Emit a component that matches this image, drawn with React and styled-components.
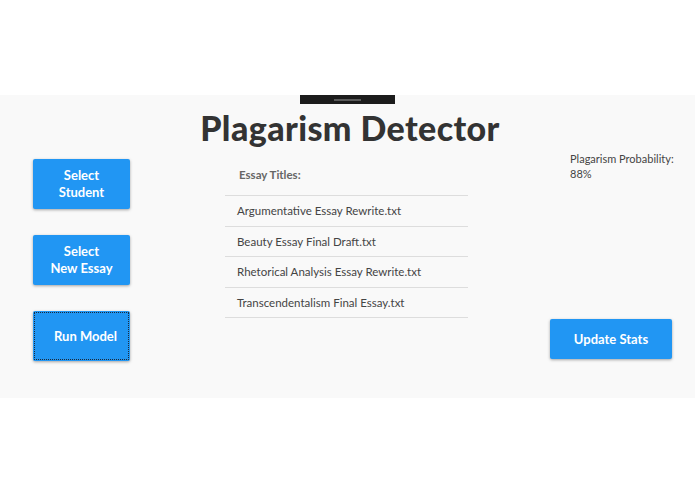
import React from "react";
import styled, { createGlobalStyle } from "styled-components";

const Global = createGlobalStyle`
  html, body { margin: 0; padding: 0; background: #ffffff; }
  body { font-family: Lato, "Open Sans", sans-serif; }
`;

const Page = styled.div`
  padding-top: 95px;
`;

const Panel = styled.section`
  background: #f9f9f9;
  height: 303px;
  display: flex;
  flex-direction: column;
  align-items: stretch;
`;

const Handle = styled.div`
  align-self: center;
  width: 95px;
  height: 9px;
  background: #1c1c1c;
  display: flex;
  justify-content: center;
  align-items: center;
  &::after {
    content: "";
    width: 27px;
    height: 2px;
    background: #5a5a5a;
  }
`;

const Title = styled.h1`
  margin: 4px 0 0;
  padding-left: 5px;
  text-align: center;
  font-family: Lato, "Open Sans", sans-serif;
  font-weight: 900;
  font-size: 34px;
  line-height: 40px;
  color: #333333;
  letter-spacing: 0.4px;
`;

const Content = styled.div`
  display: grid;
  grid-template-columns: 225px 243px 1fr;
  margin-top: 6px;
`;

const ButtonColumn = styled.div`
  display: flex;
  flex-direction: column;
  gap: 26px;
  padding: 5px 0 0 33px;
`;

const ActionButton = styled.button`
  width: ${(p) => p.$w || 97}px;
  height: ${(p) => p.$h || 50}px;
  background: #2196f3;
  color: #ffffff;
  border: none;
  border-radius: 2px;
  box-shadow: 0 1px 3px rgba(0, 0, 0, 0.35);
  font-family: Lato, "Open Sans", sans-serif;
  font-weight: 700;
  font-size: 13px;
  line-height: 17px;
  padding: ${(p) => (p.$shift ? "0 0 0 8px" : "0 6px")};
  cursor: pointer;
  outline: ${(p) => (p.$focused ? "1px dotted #1a2a3a" : "none")};
  outline-offset: -2px;
`;

const ListColumn = styled.div`
  display: flex;
  flex-direction: column;
`;

const ListHeader = styled.div`
  height: 42px;
  display: flex;
  align-items: center;
  padding: 0 0 0 14px;
  border-bottom: 1px solid #dddddd;
  font-size: 11.5px;
  font-weight: 700;
  color: #666666;
  box-sizing: border-box;
`;

const ListRow = styled.div`
  height: 30.5px;
  display: flex;
  align-items: center;
  padding-left: 12px;
  border-bottom: 1px solid #dddddd;
  font-size: 11.5px;
  color: #444444;
  box-sizing: border-box;
`;

const StatsColumn = styled.div`
  display: flex;
  flex-direction: column;
  justify-content: space-between;
  padding-left: 82px;
  height: 208px;
  margin-top: -3px;
`;

const Probability = styled.div`
  margin: 0 0 0 20px;
  font-size: 11px;
  line-height: 15px;
  color: #444444;
`;

const titles = [
  "Argumentative Essay Rewrite.txt",
  "Beauty Essay Final Draft.txt",
  "Rhetorical Analysis Essay Rewrite.txt",
  "Transcendentalism Final Essay.txt",
];

export default function App() {
  return (
    <Page>
      <Global />
      <Panel>
        <Handle />
        <Title>Plagarism Detector</Title>
        <Content>
          <ButtonColumn>
            <ActionButton>Select<br />Student</ActionButton>
            <ActionButton>Select<br />New Essay</ActionButton>
            <ActionButton $focused $shift>Run Model</ActionButton>
          </ButtonColumn>
          <ListColumn>
            <ListHeader>Essay Titles:</ListHeader>
            {titles.map((t) => (
              <ListRow key={t}>{t}</ListRow>
            ))}
          </ListColumn>
          <StatsColumn>
            <Probability>
              Plagarism Probability:
              <br />
              88%
            </Probability>
            <ActionButton $w={122} $h={40}>Update Stats</ActionButton>
          </StatsColumn>
        </Content>
      </Panel>
    </Page>
  );
}
